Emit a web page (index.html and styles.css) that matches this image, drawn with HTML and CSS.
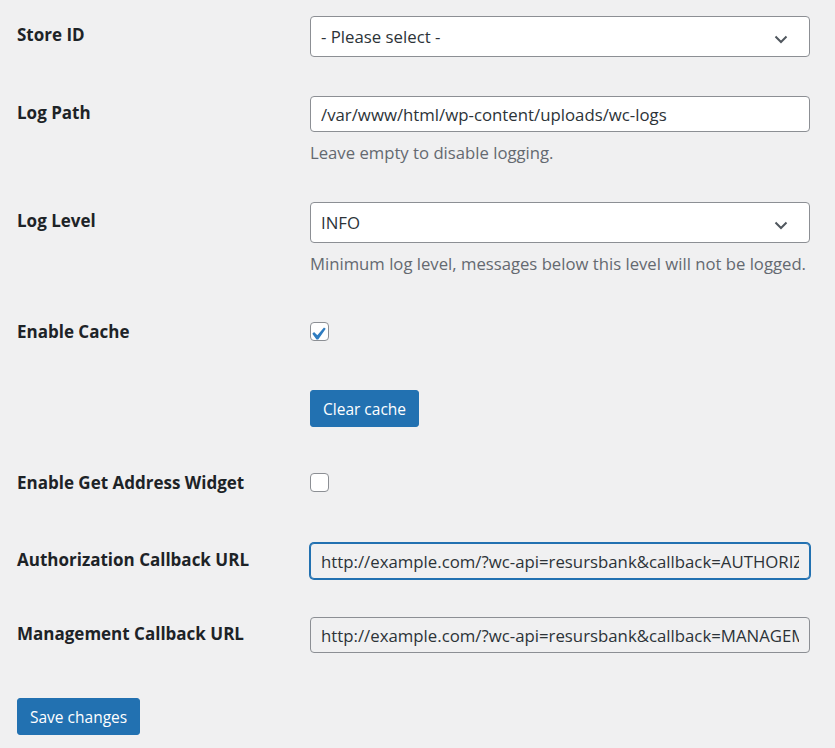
FILE: index.html
```html
<!DOCTYPE html>
<html lang="en">
<head>
<meta charset="utf-8">
<title>Settings</title>
<link rel="stylesheet" href="styles.css">
</head>
<body>
<form class="settings">
  <div class="row r-store">
    <div class="label lbl-select">Store ID</div>
    <div class="field">
      <div class="select-wrap">
        <select class="select"><option>- Please select -</option></select>
        <svg class="chev" width="14" height="9" viewBox="0 0 14 9"><path d="M1.5 1.5 7 7l5.5-5.5" fill="none" stroke="#50575e" stroke-width="2"/></svg>
      </div>
    </div>
  </div>

  <div class="row r-path">
    <div class="label lbl-input">Log Path</div>
    <div class="field">
      <input class="input" type="text" value="/var/www/html/wp-content/uploads/wc-logs">
      <p class="desc">Leave empty to disable logging.</p>
    </div>
  </div>

  <div class="row r-level">
    <div class="label lbl-select">Log Level</div>
    <div class="field">
      <div class="select-wrap">
        <select class="select"><option>INFO</option></select>
        <svg class="chev" width="14" height="9" viewBox="0 0 14 9"><path d="M1.5 1.5 7 7l5.5-5.5" fill="none" stroke="#50575e" stroke-width="2"/></svg>
      </div>
      <p class="desc">Minimum log level, messages below this level will not be logged.</p>
    </div>
  </div>

  <div class="row r-cache">
    <div class="label lbl-check">Enable Cache</div>
    <div class="field">
      <span class="check">
        <svg width="19" height="19" viewBox="4 0.6 14.7 14.7"><path d="M14.83 4.89l1.34.94-5.81 8.38H9.02L5.78 9.67l1.34-1.25 2.57 2.4z" fill="#2f7cc0"/></svg>
      </span>
    </div>
  </div>

  <div class="row r-clear">
    <div class="label"></div>
    <div class="field">
      <button type="button" class="btn">Clear cache</button>
    </div>
  </div>

  <div class="row r-widget">
    <div class="label lbl-check">Enable Get Address Widget</div>
    <div class="field">
      <span class="check"></span>
    </div>
  </div>

  <div class="row r-auth">
    <div class="label lbl-input">Authorization Callback URL</div>
    <div class="field">
      <input class="input readonly focus" type="text" readonly value="http://example.com/?wc-api=resursbank&amp;callback=AUTHORIZATION">
    </div>
  </div>

  <div class="row r-mgmt">
    <div class="label lbl-input">Management Callback URL</div>
    <div class="field">
      <input class="input readonly" type="text" readonly value="http://example.com/?wc-api=resursbank&amp;callback=MANAGEMENT">
    </div>
  </div>

  <div class="submit">
    <button type="button" class="btn">Save changes</button>
  </div>
</form>
</body>
</html>
```

FILE: styles.css
```css
* { box-sizing: border-box; }

html, body {
  margin: 0;
  padding: 0;
  background: #f0f0f1;
}

body {
  font-family: "Open Sans", "Noto Sans", sans-serif;
  color: #1d2327;
  font-size: 16px;
}

.settings {
  padding: 16px 0 0 17px;
  width: 835px;
}

.row {
  display: grid;
  grid-template-columns: 293px 500px;
  align-items: start;
}

.r-store { margin-bottom: 39px; }
.r-path { margin-bottom: 38px; }
.r-level { margin-bottom: 47px; }
.r-cache { margin-bottom: 49px; }
.r-clear { margin-bottom: 46px; }
.r-widget { margin-bottom: 51px; }
.r-auth { margin-bottom: 38px; }
.r-mgmt { margin-bottom: 45px; }

.label {
  font-weight: 700;
  font-size: 17px;
  line-height: 22px;
  color: #1d2327;
  white-space: nowrap;
}

.lbl-select { padding-top: 8px; }
.lbl-input { padding-top: 6px; }
.lbl-check { height: 19px; line-height: 19px; }

.field {
  display: flex;
  flex-direction: column;
  align-items: flex-start;
}

.select-wrap {
  position: relative;
  width: 500px;
  height: 41px;
}

.select {
  appearance: none;
  -webkit-appearance: none;
  width: 100%;
  height: 41px;
  border: 1px solid #8c8f94;
  border-radius: 4px;
  background: #fff;
  font-family: inherit;
  font-size: 16.8px;
  color: #2c3338;
  padding: 0 30px 0 10px;
  margin: 0;
}

.chev {
  position: absolute;
  right: 22px;
  top: 19px;
  pointer-events: none;
}

.input {
  width: 500px;
  height: 36px;
  border: 1px solid #8c8f94;
  border-radius: 4px;
  background: #fff;
  font-family: inherit;
  font-size: 16.8px;
  color: #2c3338;
  padding: 0 10px;
  margin: 0;
  outline: none;
}

.input.readonly {
  background: #f0f0f1;
}

.input.focus {
  border-color: #2271b1;
  box-shadow: 0 0 0 1px #2271b1;
}

.desc {
  margin: 10px 0 0;
  font-size: 16.7px;
  line-height: 22px;
  color: #646970;
  white-space: nowrap;
}

.check {
  display: block;
  width: 19px;
  height: 19px;
  border: 1px solid #8c8f94;
  border-radius: 4px;
  background: #fff;
  position: relative;
}

.check svg {
  position: absolute;
  left: -1px;
  top: -1px;
}

.btn {
  background: #2271b1;
  color: #fff;
  border: 1px solid #2271b1;
  border-radius: 3px;
  font-family: inherit;
  font-size: 15.5px;
  height: 37px;
  padding: 0 12px;
  margin: 0;
  cursor: pointer;
}

.submit {
  padding-bottom: 11px;
}
```
